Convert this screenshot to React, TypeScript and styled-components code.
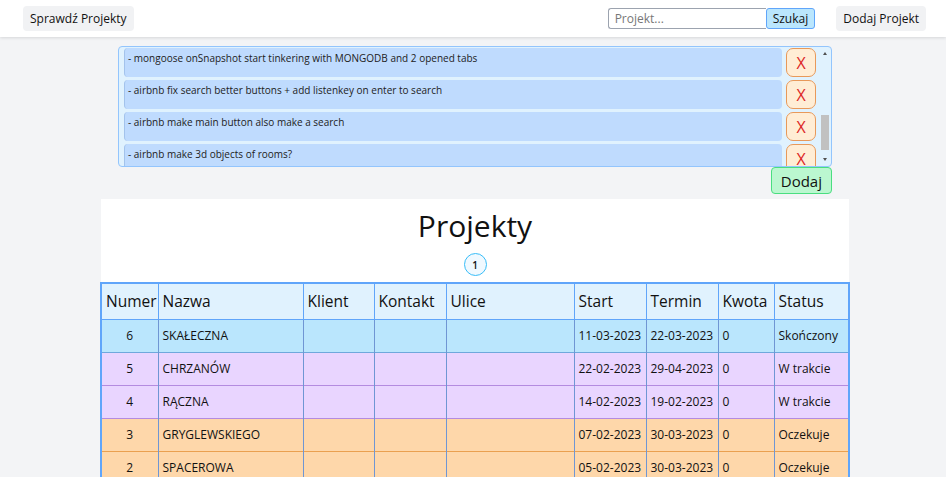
import React, { useEffect, useRef } from "react";
import styled, { createGlobalStyle } from "styled-components";

const Global = createGlobalStyle`
  html { scrollbar-width: none; }
  body {
    margin: 0;
    background: #f3f4f6;
    font-family: "Open Sans", "Noto Sans", sans-serif;
    color: #111;
  }
  * { box-sizing: border-box; }
`;

const Header = styled.header`
  height: 37px;
  background: #fff;
  box-shadow: 0 1px 3px rgba(0, 0, 0, 0.12);
  display: flex;
  align-items: center;
  justify-content: space-between;
  padding: 0 20px 0 23px;
`;

const NavButton = styled.button`
  font-family: inherit;
  font-size: 12px;
  height: 25px;
  padding: 0 7px;
  background: #f1f2f4;
  border: none;
  border-radius: 4px;
  color: #111;
`;

const RightGroup = styled.div`
  display: flex;
  align-items: center;
  gap: 21px;
`;

const SearchForm = styled.div`
  display: flex;
  align-items: center;
`;

const SearchInput = styled.input`
  font-family: inherit;
  font-size: 12px;
  width: 158px;
  height: 21px;
  padding: 0 6px;
  border: 1px solid #9ca3af;
  border-right: none;
  border-radius: 3px 0 0 3px;
  outline: none;
  &::placeholder { color: #777; }
`;

const SearchButton = styled.button`
  font-family: inherit;
  font-size: 12px;
  height: 21px;
  padding: 0 6px;
  background: #bae6fd;
  border: 1px solid #60a5fa;
  border-radius: 3px;
  color: #111;
`;

const Main = styled.main`
  display: flex;
  flex-direction: column;
  align-items: center;
  padding: 9px 0 0 4px;
`;

const NotesWrap = styled.section`
  width: 714px;
  display: flex;
  flex-direction: column;
  align-items: flex-end;
`;

const NotesFrame = styled.div`
  width: 100%;
  height: 121px;
  background: #e0f2fe;
  border: 1px solid #93c5fd;
  border-radius: 4px;
  display: flex;
`;

const NotesList = styled.div`
  flex: 1;
  overflow: hidden;
  padding: 0 3px 0 5px;
`;

const ScrollTrack = styled.div`
  width: 12px;
  display: flex;
  flex-direction: column;
  align-items: center;
  padding: 2px 0 2px;
`;

const ScrollArrow = styled.div<{ $down?: boolean }>`
  width: 0;
  height: 0;
  border-left: 2.5px solid transparent;
  border-right: 2.5px solid transparent;
  ${(p) =>
    p.$down
      ? "border-top: 3px solid #505050; margin-top: auto; margin-bottom: 3px;"
      : "border-bottom: 3px solid #505050; margin-top: 3px;"}
`;

const ScrollThumb = styled.div`
  width: 8px;
  height: 35px;
  background: #c1c1c1;
  margin-top: 60px;
`;

const NoteRow = styled.div`
  display: flex;
  gap: 4px;
  margin-bottom: 3px;
`;

const NoteText = styled.div`
  flex: 1;
  min-height: 29px;
  background: #bfdbfe;
  border-left: 1px solid #a3c3ec;
  border-radius: 4px;
  font-size: 10px;
  line-height: 15px;
  padding: 3px 3px;
  color: #222;
`;

const DeleteButton = styled.button`
  width: 30px;
  height: 29px;
  background: #ffedd5;
  border: 1px solid #e8995a;
  border-radius: 7px;
  color: #dc2626;
  font-family: inherit;
  font-size: 16px;
  line-height: 1;
  padding: 0;
`;

const AddButton = styled.button`
  font-family: inherit;
  font-size: 15px;
  height: 27px;
  padding: 0 9px;
  background: #bbf7d0;
  border: 1px solid #4ade80;
  border-radius: 4px;
  color: #111;
`;

const Card = styled.section`
  width: 748px;
  margin-top: 5px;
  background: #fff;
  display: flex;
  flex-direction: column;
  align-items: center;
`;

const Title = styled.h1`
  margin: 8px 0 0;
  font-size: 30px;
  font-weight: 400;
  line-height: 38px;
`;

const Pager = styled.div`
  display: flex;
  gap: 6px;
  margin: 8px 0 6px;
`;

const PageDot = styled.span`
  width: 23px;
  height: 23px;
  border-radius: 50%;
  border: 1px solid #38bdf8;
  background: #f0f9ff;
  display: flex;
  align-items: center;
  justify-content: center;
  font-size: 10px;
  font-weight: 600;
`;

const Table = styled.table`
  width: 100%;
  border-collapse: collapse;
  border: 2px solid #60a5fa;
  table-layout: fixed;
`;

const Th = styled.th`
  background: #e0f2fe;
  border: 1px solid #60a5fa;
  font-size: 15.5px;
  font-weight: 400;
  text-align: left;
  padding: 0 4px;
  height: 36px;
  white-space: nowrap;
`;

type Tone = "done" | "progress" | "waiting";

const tones: Record<Tone, { bg: string; line: string }> = {
  done: { bg: "#bae6fd", line: "#6fa8dc" },
  progress: { bg: "#e9d5ff", line: "#b48be0" },
  waiting: { bg: "#fed7aa", line: "#eaa050" },
};

const Tr = styled.tr<{ $tone: Tone }>`
  background: ${(p) => tones[p.$tone].bg};
  border-bottom: 1px solid ${(p) => tones[p.$tone].line};
`;

const Td = styled.td<{ $center?: boolean }>`
  border-left: 1px solid #6f96d4;
  border-right: 1px solid #6f96d4;
  font-size: 12px;
  height: 33px;
  padding: 0 4px;
  text-align: ${(p) => (p.$center ? "center" : "left")};
  white-space: nowrap;
`;

const notes = [
  "- airbnb add login modal",
  "- mongoose schema for projects",
  "- airbnb style header menu",
  "- react router for project pages",
  "- firebase auth with google",
  "- airbnb map with pins",
  "- tailwind grid for cards",
  "- mongoose onSnapshot start tinkering with MONGODB and 2 opened tabs",
  "- airbnb fix search better buttons + add listenkey on enter to search",
  "- airbnb make main button also make a search",
  "- airbnb make 3d objects of rooms?",
  "- airbnb calendar for reservations",
];

const cols = [
  { name: "Numer", w: 57 },
  { name: "Nazwa", w: 145 },
  { name: "Klient", w: 71 },
  { name: "Kontakt", w: 72 },
  { name: "Ulice", w: 128 },
  { name: "Start", w: 72 },
  { name: "Termin", w: 72 },
  { name: "Kwota", w: 56 },
  { name: "Status", w: 75 },
];

const rows: { n: number; name: string; start: string; end: string; status: string; tone: Tone }[] = [
  { n: 6, name: "SKAŁECZNA", start: "11-03-2023", end: "22-03-2023", status: "Skończony", tone: "done" },
  { n: 5, name: "CHRZANÓW", start: "22-02-2023", end: "29-04-2023", status: "W trakcie", tone: "progress" },
  { n: 4, name: "RĄCZNA", start: "14-02-2023", end: "19-02-2023", status: "W trakcie", tone: "progress" },
  { n: 3, name: "GRYGLEWSKIEGO", start: "07-02-2023", end: "30-03-2023", status: "Oczekuje", tone: "waiting" },
  { n: 2, name: "SPACEROWA", start: "05-02-2023", end: "30-03-2023", status: "Oczekuje", tone: "waiting" },
  { n: 1, name: "KRAKOWSKA", start: "01-02-2023", end: "28-02-2023", status: "Oczekuje", tone: "waiting" },
];

export default function App() {
  const listRef = useRef<HTMLDivElement>(null);
  useEffect(() => {
    if (listRef.current) listRef.current.scrollTop = 7 * 32 - 1;
  }, []);

  return (
    <>
      <Global />
      <Header>
        <NavButton>Sprawdź Projekty</NavButton>
        <RightGroup>
          <SearchForm>
            <SearchInput placeholder="Projekt..." />
            <SearchButton>Szukaj</SearchButton>
          </SearchForm>
          <NavButton>Dodaj Projekt</NavButton>
        </RightGroup>
      </Header>
      <Main>
        <NotesWrap>
          <NotesFrame>
            <NotesList ref={listRef}>
              {notes.map((t) => (
                <NoteRow key={t}>
                  <NoteText>{t}</NoteText>
                  <DeleteButton>X</DeleteButton>
                </NoteRow>
              ))}
            </NotesList>
            <ScrollTrack>
              <ScrollArrow />
              <ScrollThumb />
              <ScrollArrow $down />
            </ScrollTrack>
          </NotesFrame>
          <AddButton>Dodaj</AddButton>
        </NotesWrap>
        <Card>
          <Title>Projekty</Title>
          <Pager>
            <PageDot>1</PageDot>
          </Pager>
          <Table>
            <colgroup>
              {cols.map((c) => (
                <col key={c.name} style={{ width: c.w }} />
              ))}
            </colgroup>
            <thead>
              <tr>
                {cols.map((c) => (
                  <Th key={c.name}>{c.name}</Th>
                ))}
              </tr>
            </thead>
            <tbody>
              {rows.map((r) => (
                <Tr key={r.n} $tone={r.tone}>
                  <Td $center>{r.n}</Td>
                  <Td>{r.name}</Td>
                  <Td />
                  <Td />
                  <Td />
                  <Td>{r.start}</Td>
                  <Td>{r.end}</Td>
                  <Td>0</Td>
                  <Td>{r.status}</Td>
                </Tr>
              ))}
            </tbody>
          </Table>
        </Card>
      </Main>
    </>
  );
}
